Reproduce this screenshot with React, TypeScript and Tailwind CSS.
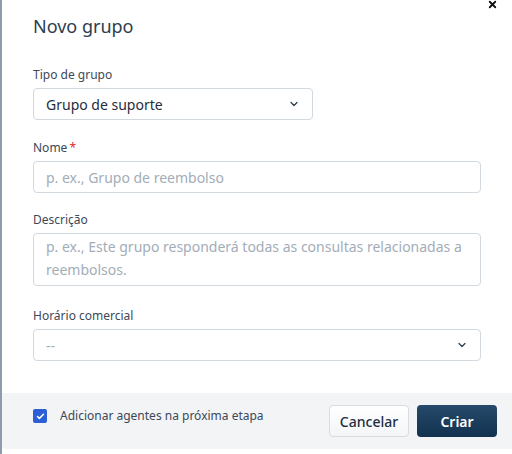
import { Check, ChevronDown, X } from 'lucide-react';

const Label = ({ children, required }: { children: React.ReactNode; required?: boolean }) => (
  <label className="block text-[12px] leading-[18px] text-[#3c4858] mb-[4px]">
    {children}
    {required && <span className="text-[#d72d2d] ml-[2px]">*</span>}
  </label>
);

export default function App() {
  return (
    <div
      className="w-[512px] h-[454px] flex bg-white overflow-hidden"
      style={{ fontFamily: '"Noto Sans", "Open Sans", Arial, sans-serif' }}
    >
      <div className="w-[2px] bg-[#8d9cac] shrink-0" />
      <div className="flex-1 flex flex-col relative">
        <button className="absolute right-[14px] top-[-1px] text-[#111]">
          <X className="h-[11px] w-[11px]" strokeWidth={4} />
        </button>

        <div className="pl-[31px] pr-[31px] pt-[12px]">
          <h1 className="text-[18px] leading-[28px] text-[#2d3e50]">Novo grupo</h1>

          <div className="mt-[26px]">
            <Label>Tipo de grupo</Label>
            <div className="w-[280px] h-[32px] border border-[#d1d8de] rounded-[4px] flex items-center justify-between pl-[12px] pr-[12px] text-[14px] text-[#1f2d3d]">
              <span>Grupo de suporte</span>
              <ChevronDown className="h-[12px] w-[12px] text-[#2d3e50]" strokeWidth={2.5} />
            </div>
          </div>

          <div className="mt-[19px]">
            <Label required>Nome</Label>
            <div className="h-[32px] border border-[#d1d8de] rounded-[4px] flex items-center pl-[12px] text-[14px] text-[#a3adb8]">
              p. ex., Grupo de reembolso
            </div>
          </div>

          <div className="mt-[18px]">
            <Label>Descrição</Label>
            <div className="h-[53px] border border-[#d1d8de] rounded-[4px] pl-[12px] pr-[12px] pt-[1px] text-[14px] leading-[23px] text-[#a3adb8]">
              p. ex., Este grupo responderá todas as consultas relacionadas a reembolsos.
            </div>
          </div>

          <div className="mt-[21px]">
            <Label>Horário comercial</Label>
            <div className="h-[32px] border border-[#d1d8de] rounded-[4px] flex items-center justify-between pl-[12px] pr-[12px] text-[14px] text-[#a3adb8]">
              <span>--</span>
              <ChevronDown className="h-[12px] w-[12px] text-[#2d3e50]" strokeWidth={2.5} />
            </div>
          </div>
        </div>

        <div className="mt-[32px] h-[56px] bg-[#f3f4f6] rounded-bl-[4px] flex items-center justify-between pl-[31px] pr-[15px]">
          <div className="flex items-center gap-[13px] -mt-[10px]">
            <span className="w-[14px] h-[14px] rounded-[2px] bg-[#2c5fd6] flex items-center justify-center">
              <Check className="h-[9px] w-[9px] text-white" strokeWidth={4} />
            </span>
            <span className="text-[12px] text-[#3c4858]">Adicionar agentes na próxima etapa</span>
          </div>
          <div className="flex items-center gap-[8px]">
            <button className="w-[80px] h-[32px] rounded-[4px] border border-[#d8dde3] bg-gradient-to-b from-white to-[#f3f5f7] text-[14px] font-medium text-[#1f2d3d]">
              Cancelar
            </button>
            <button className="w-[80px] h-[32px] rounded-[4px] bg-gradient-to-b from-[#264a6b] to-[#12324f] text-[14px] font-semibold text-white">
              Criar
            </button>
          </div>
        </div>
        <div className="flex-1 bg-white" />
      </div>
    </div>
  );
}
